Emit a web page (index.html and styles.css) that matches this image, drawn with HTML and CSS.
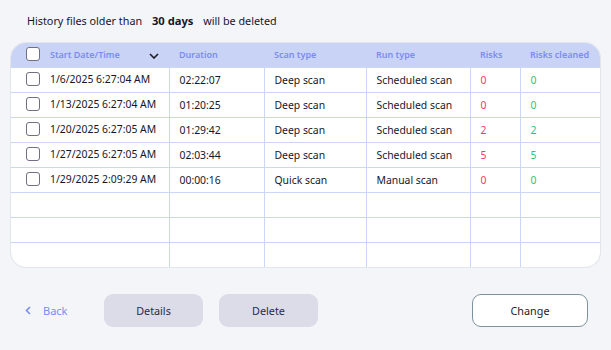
FILE: index.html
```html
<!DOCTYPE html>
<html>
<head>
<meta charset="utf-8">
<link rel="stylesheet" href="styles.css">
</head>
<body>
<div class="page">
  <p class="notice">History files older than <b class="days">30 days</b> will be deleted</p>
  <div class="table-wrap">
    <table class="history">
      <colgroup>
        <col class="c1"><col class="c2"><col class="c3"><col class="c4"><col class="c5"><col class="c6">
      </colgroup>
      <thead>
        <tr>
          <th class="first"><span class="cb"></span><span class="hlabel">Start Date/Time</span>
            <svg class="chev" width="10" height="6" viewBox="0 0 10 6"><path d="M1 1 L5 5 L9 1" fill="none" stroke="#1c1c28" stroke-width="1.6"/></svg>
          </th>
          <th>Duration</th>
          <th>Scan type</th>
          <th>Run type</th>
          <th>Risks</th>
          <th>Risks cleaned</th>
        </tr>
      </thead>
      <tbody>
        <tr><td class="first"><span class="cb"></span>1/6/2025 6:27:04 AM</td><td>02:22:07</td><td>Deep scan</td><td>Scheduled scan</td><td class="red">0</td><td class="green">0</td></tr>
        <tr><td class="first"><span class="cb"></span>1/13/2025 6:27:04 AM</td><td>01:20:25</td><td>Deep scan</td><td>Scheduled scan</td><td class="red">0</td><td class="green">0</td></tr>
        <tr><td class="first"><span class="cb"></span>1/20/2025 6:27:05 AM</td><td>01:29:42</td><td>Deep scan</td><td>Scheduled scan</td><td class="red">2</td><td class="green">2</td></tr>
        <tr><td class="first"><span class="cb"></span>1/27/2025 6:27:05 AM</td><td>02:03:44</td><td>Deep scan</td><td>Scheduled scan</td><td class="red">5</td><td class="green">5</td></tr>
        <tr><td class="first"><span class="cb"></span>1/29/2025 2:09:29 AM</td><td>00:00:16</td><td>Quick scan</td><td>Manual scan</td><td class="red">0</td><td class="green">0</td></tr>
        <tr class="empty"><td></td><td></td><td></td><td></td><td></td><td></td></tr>
        <tr class="empty"><td></td><td></td><td></td><td></td><td></td><td></td></tr>
        <tr class="empty last"><td></td><td></td><td></td><td></td><td></td><td></td></tr>
      </tbody>
    </table>
  </div>
  <div class="actions">
    <a class="back"><svg width="6" height="9" viewBox="0 0 6 9"><path d="M5 1 L1.5 4.5 L5 8" fill="none" stroke="#7a8cf0" stroke-width="1.6"/></svg><span>Back</span></a>
    <button class="btn grey details">Details</button>
    <button class="btn grey">Delete</button>
    <span class="spacer"></span>
    <button class="btn change">Change</button>
  </div>
</div>
</body>
</html>
```

FILE: styles.css
```css
* { box-sizing: border-box; }
html, body { margin: 0; padding: 0; }
body {
  background: #f4f5f9;
  font-family: "Noto Sans", "Open Sans", sans-serif;
  color: #16162a;
  width: 611px;
  height: 350px;
  overflow: hidden;
}
.page {
  padding: 12px 11px 0 11px;
}
.notice {
  margin: 0 0 0 16px;
  font-size: 10.8px;
  line-height: 17px;
  height: 31px;
}
.notice .days {
  font-weight: 700;
  font-size: 11.2px;
  margin: 0 7px;
}
.table-wrap {
  width: 589px;
  border-radius: 15px;
  overflow: hidden;
  background: #fff;
  box-shadow: 0 0 0 1px #e3e5ec;
}
.history {
  width: 589px;
  border-collapse: collapse;
  table-layout: fixed;
  font-size: 10.4px;
}
.c1 { width: 158px; }
.c2 { width: 95px; }
.c3 { width: 102px; }
.c4 { width: 104px; }
.c5 { width: 50px; }
.c6 { width: 80px; }
.history th {
  background: #c9d3f6;
  color: #7b8cf2;
  font-weight: 600;
  font-size: 9px;
  text-align: left;
  height: 24px;
  padding: 0 0 0 10px;
  white-space: nowrap;
}
.history td {
  height: 25px;
  padding: 0 0 0 10px;
  border-left: 1px solid #cbd5f5;
  border-top: 1px solid #cbd5f5;
  white-space: nowrap;
}
.history td:first-child { border-left: none; }
.history th.first, .history td.first {
  padding-left: 15px;
}
.history th.first {
  position: relative;
}
.cb {
  display: inline-block;
  width: 14px;
  height: 14px;
  border: 1px solid #707080;
  border-radius: 3px;
  background: #fff;
  vertical-align: middle;
  margin-right: 10px;
  position: relative;
  top: -1px;
}
.hlabel { vertical-align: middle; }
.chev {
  position: absolute;
  left: 138px;
  top: 10px;
}
.red { color: #f23a5e; }
.green { color: #2fc36c; }
.actions {
  display: flex;
  align-items: center;
  margin-top: 27px;
  padding-left: 14px;
}
.back {
  display: flex;
  align-items: center;
  color: #7a8cf0;
  font-size: 11px;
  width: 79px;
}
.back svg { margin-right: 12px; }
.btn {
  font-family: "Noto Sans", "Open Sans", sans-serif;
  font-size: 10.8px;
  height: 33px;
  border-radius: 9px;
  border: none;
  color: #2a2a48;
  padding: 0;
}
.grey {
  background: #dcdce8;
  width: 99px;
  margin-right: 16px;
}
.spacer { flex: 1; }
.change {
  background: #fff;
  border: 1px solid #7c939d;
  width: 116px;
  margin-right: 12px;
  color: #1b1b2b;
}
```
